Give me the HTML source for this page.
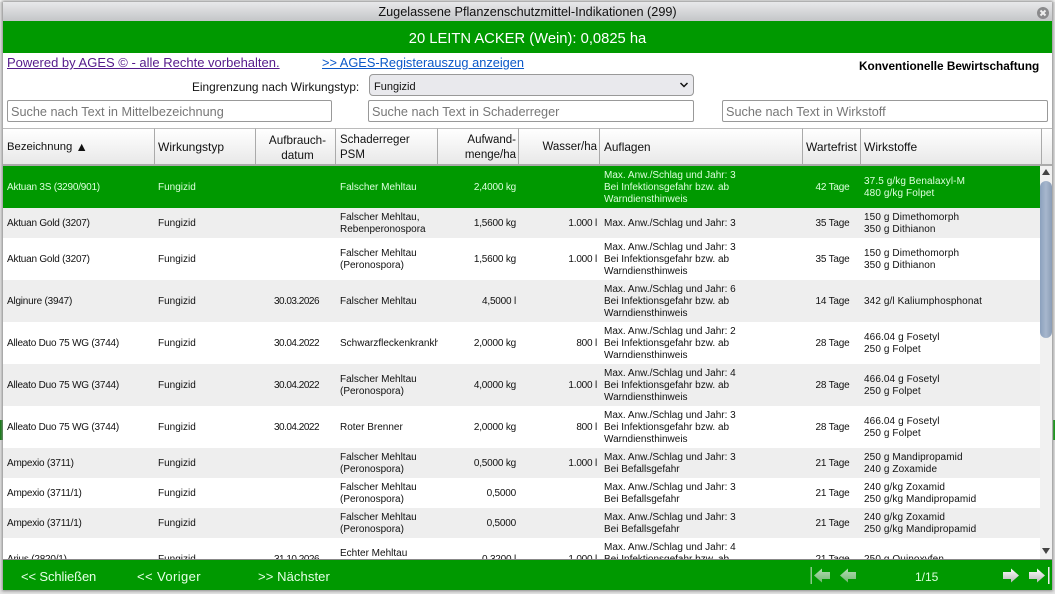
<!DOCTYPE html>
<html><head><meta charset="utf-8"><style>
html,body{margin:0;padding:0;width:1055px;height:594px;overflow:hidden;background:#e4e4e4;font-family:"Liberation Sans",sans-serif;color:#111}
.a{position:absolute;white-space:nowrap}
#win{position:absolute;left:3px;top:2px;width:1049px;height:588px;background:#fff;box-shadow:0 0 3px 1px #888}
#title{left:3px;top:2px;width:1049px;height:19px;background:linear-gradient(#e8e8ea,#c4c6c8);text-align:center;font-size:12.7px;line-height:21px}
#g1{left:3px;top:21px;width:1049px;height:32px;background:#009900;color:#fff;text-align:center;font-size:14.75px;line-height:36px}
a{color:#551a8b;text-decoration:underline}
.inp{height:20px;border:1px solid #999;border-radius:2px;background:#fff;color:#777;font-size:12.7px;line-height:22px;padding-left:3px;box-sizing:content-box;top:100px}
#tbl{position:absolute;left:4px;top:166px;width:1036px;height:393px;overflow:hidden}
table{border-collapse:collapse;table-layout:fixed;width:1037px;font-size:10px;line-height:12px}
td{padding:2px 3px 0;overflow:hidden;white-space:nowrap;vertical-align:middle}
td:first-child{letter-spacing:-.22px}
td:nth-child(3){text-align:center;letter-spacing:-.5px;padding-left:0;padding-right:0}
td:nth-child(5){letter-spacing:-.2px}
td:nth-child(6){padding-right:4px;letter-spacing:-.2px}
td:nth-child(8){letter-spacing:-.2px}
td:nth-child(9){letter-spacing:.1px}
.r{text-align:right}.c{text-align:center}
tbody tr:nth-child(even) td{background:#eee}
tr.s td{background:#009900!important;color:#dcffdc}
.h{position:absolute;top:128px;height:38px;background:linear-gradient(#fff,#e8e8e8);border-top:1px solid #bbb;border-bottom:2px solid #aaa;border-right:1px solid #aaa;box-sizing:border-box;font-size:12px;line-height:15px;display:flex;align-items:center;padding:2px 3px 0}
#foot{left:3px;top:559px;width:1049px;height:31px;background:#009900;border-top:1px solid #888;box-sizing:border-box}
.f{top:569px;font-size:13px;line-height:16px;color:#e6ffe6}
</style></head><body>
<div class="a" style="left:0;top:0;width:1055px;height:2px;background:#f4f4f4"></div>
<div class="a" style="left:0;top:420px;width:3px;height:20px;background:#0a7a0a"></div>
<div class="a" style="left:1053px;top:420px;width:2px;height:20px;background:#0a9a0a"></div>
<div id="win"></div>
<div class="a" id="title">Zugelassene Pflanzenschutzmittel-Indikationen (299)</div>
<svg class="a" style="left:1036px;top:6px" width="14" height="14" viewBox="0 0 14 14"><circle cx="7" cy="7" r="6" fill="#8a8a8c"/><path d="M4.500 4.500l5 5M9.500 4.500l-5 5" stroke="#eee" stroke-width="2"/></svg>
<div class="a" id="g1">20 LEITN ACKER (Wein): 0,0825 ha</div>
<a class="a" style="left:7px;top:55px;font-size:13px;line-height:16px">Powered by AGES © - alle Rechte vorbehalten.</a>
<a class="a" style="left:322px;top:55px;font-size:12.8px;line-height:16px;color:#0a58c8">&gt;&gt; AGES-Registerauszug anzeigen</a>
<div class="a" style="left:859px;top:59px;font-size:11.8px;line-height:14px;font-weight:bold;color:#000">Konventionelle Bewirtschaftung</div>
<div class="a" style="left:192px;top:80px;font-size:11.85px;line-height:14px">Eingrenzung nach Wirkungstyp:</div>
<div class="a" style="left:369px;top:74px;width:325px;height:22px;box-sizing:border-box;border:1px solid #999;border-radius:4px;background:#e9e9ed;font-size:11px;line-height:24px;padding-left:4px">Fungizid</div>
<svg class="a" style="left:679px;top:81px" width="10" height="8" viewBox="0 0 10 8"><path d="M1.500 2l3.500 3.500L8.500 2" fill="none" stroke="#111" stroke-width="1.500"/></svg>
<div class="a inp" style="left:7px;width:320px">Suche nach Text in Mittelbezeichnung</div>
<div class="a inp" style="left:368px;width:321px">Suche nach Text in Schaderreger</div>
<div class="a inp" style="left:722px;width:321px">Suche nach Text in Wirkstoff</div>

<div class="h" style="left:3px;width:152px;padding-left:4px;font-size:11.3px">Bezeichnung&nbsp;<span style="font-size:12.5px">▲</span></div>
<div class="h" style="left:155px;width:101px">Wirkungstyp</div>
<div class="h" style="left:256px;width:80px;justify-content:center;text-align:center;font-size:11.7px;padding-left:4px;padding-right:0">Aufbrauch-<br>datum</div>
<div class="h" style="left:336px;width:102px;font-size:11.5px;padding-left:4px">Schaderreger<br>PSM</div>
<div class="h" style="left:438px;width:81px;justify-content:flex-end;text-align:right;font-size:11.5px;padding-right:2px">Aufwand-<br>menge/ha</div>
<div class="h" style="left:519px;width:81px;justify-content:flex-end;font-size:11.5px;padding-right:2px">Wasser/ha</div>
<div class="h" style="left:600px;width:203px;font-size:11.8px;padding-left:4px">Auflagen</div>
<div class="h" style="left:803px;width:58px">Wartefrist</div>
<div class="h" style="left:861px;width:181px">Wirkstoffe</div>
<div class="h" style="left:1042px;width:10px;border-right:0"></div>

<div class="a" style="left:3px;top:166px;width:1px;height:42px;background:#009900"></div>
<div class="a" style="left:3px;top:208px;width:1px;height:30px;background:#eee"></div>
<div class="a" style="left:3px;top:280px;width:1px;height:42px;background:#eee"></div>
<div class="a" style="left:3px;top:364px;width:1px;height:42px;background:#eee"></div>
<div class="a" style="left:3px;top:448px;width:1px;height:30px;background:#eee"></div>
<div class="a" style="left:3px;top:508px;width:1px;height:30px;background:#eee"></div>

<div id="tbl"><table>
<colgroup><col style="width:151px"><col style="width:101px"><col style="width:81px"><col style="width:101px"><col style="width:81px"><col style="width:82px"><col style="width:203px"><col style="width:57px"><col style="width:180px"></colgroup>
<tbody>
<tr class="s" style="height:42px"><td>Aktuan 3S (3290/901)</td><td>Fungizid</td><td class="c"></td><td>Falscher Mehltau</td><td class="r">2,4000 kg</td><td class="r"></td><td>Max. Anw./Schlag und Jahr: 3<br>Bei Infektionsgefahr bzw. ab<br>Warndiensthinweis</td><td class="c">42 Tage</td><td>37.5 g/kg Benalaxyl-M<br>480 g/kg Folpet</td></tr>
<tr style="height:30px"><td>Aktuan Gold (3207)</td><td>Fungizid</td><td class="c"></td><td>Falscher Mehltau,<br>Rebenperonospora</td><td class="r">1,5600 kg</td><td class="r">1.000 l</td><td>Max. Anw./Schlag und Jahr: 3</td><td class="c">35 Tage</td><td>150 g Dimethomorph<br>350 g Dithianon</td></tr>
<tr style="height:42px"><td>Aktuan Gold (3207)</td><td>Fungizid</td><td class="c"></td><td>Falscher Mehltau<br>(Peronospora)</td><td class="r">1,5600 kg</td><td class="r">1.000 l</td><td>Max. Anw./Schlag und Jahr: 3<br>Bei Infektionsgefahr bzw. ab<br>Warndiensthinweis</td><td class="c">35 Tage</td><td>150 g Dimethomorph<br>350 g Dithianon</td></tr>
<tr style="height:42px"><td>Alginure (3947)</td><td>Fungizid</td><td class="c">30.03.2026</td><td>Falscher Mehltau</td><td class="r">4,5000 l</td><td class="r"></td><td>Max. Anw./Schlag und Jahr: 6<br>Bei Infektionsgefahr bzw. ab<br>Warndiensthinweis</td><td class="c">14 Tage</td><td>342 g/l Kaliumphosphonat</td></tr>
<tr style="height:42px"><td>Alleato Duo 75 WG (3744)</td><td>Fungizid</td><td class="c">30.04.2022</td><td>Schwarzfleckenkrankheit</td><td class="r">2,0000 kg</td><td class="r">800 l</td><td>Max. Anw./Schlag und Jahr: 2<br>Bei Infektionsgefahr bzw. ab<br>Warndiensthinweis</td><td class="c">28 Tage</td><td>466.04 g Fosetyl<br>250 g Folpet</td></tr>
<tr style="height:42px"><td>Alleato Duo 75 WG (3744)</td><td>Fungizid</td><td class="c">30.04.2022</td><td>Falscher Mehltau<br>(Peronospora)</td><td class="r">4,0000 kg</td><td class="r">1.000 l</td><td>Max. Anw./Schlag und Jahr: 4<br>Bei Infektionsgefahr bzw. ab<br>Warndiensthinweis</td><td class="c">28 Tage</td><td>466.04 g Fosetyl<br>250 g Folpet</td></tr>
<tr style="height:42px"><td>Alleato Duo 75 WG (3744)</td><td>Fungizid</td><td class="c">30.04.2022</td><td>Roter Brenner</td><td class="r">2,0000 kg</td><td class="r">800 l</td><td>Max. Anw./Schlag und Jahr: 3<br>Bei Infektionsgefahr bzw. ab<br>Warndiensthinweis</td><td class="c">28 Tage</td><td>466.04 g Fosetyl<br>250 g Folpet</td></tr>
<tr style="height:30px"><td>Ampexio (3711)</td><td>Fungizid</td><td class="c"></td><td>Falscher Mehltau<br>(Peronospora)</td><td class="r">0,5000 kg</td><td class="r">1.000 l</td><td>Max. Anw./Schlag und Jahr: 3<br>Bei Befallsgefahr</td><td class="c">21 Tage</td><td>250 g Mandipropamid<br>240 g Zoxamide</td></tr>
<tr style="height:30px"><td>Ampexio (3711/1)</td><td>Fungizid</td><td class="c"></td><td>Falscher Mehltau<br>(Peronospora)</td><td class="r">0,5000</td><td class="r"></td><td>Max. Anw./Schlag und Jahr: 3<br>Bei Befallsgefahr</td><td class="c">21 Tage</td><td>240 g/kg Zoxamid<br>250 g/kg Mandipropamid</td></tr>
<tr style="height:30px"><td>Ampexio (3711/1)</td><td>Fungizid</td><td class="c"></td><td>Falscher Mehltau<br>(Peronospora)</td><td class="r">0,5000</td><td class="r"></td><td>Max. Anw./Schlag und Jahr: 3<br>Bei Befallsgefahr</td><td class="c">21 Tage</td><td>240 g/kg Zoxamid<br>250 g/kg Mandipropamid</td></tr>
<tr style="height:42px"><td>Arius (2820/1)</td><td>Fungizid</td><td class="c">31.10.2026</td><td>Echter Mehltau<br>(Oidium)</td><td class="r">0,3200 l</td><td class="r">1.000 l</td><td>Max. Anw./Schlag und Jahr: 4<br>Bei Infektionsgefahr bzw. ab<br>Warndiensthinweis</td><td class="c">21 Tage</td><td>250 g Quinoxyfen</td></tr>
</tbody></table></div>

<div class="a" style="left:1040px;top:166px;width:12px;height:393px;background:#f1f1f1"></div>
<div class="a" style="left:1040px;top:181px;width:12px;height:157px;border-radius:6px;background:linear-gradient(90deg,#8ba0bd,#a7b7cd 50%,#8a9cb5)"></div>
<svg class="a" style="left:1041px;top:168px" width="10" height="8"><path d="M5 1l4 6H1z" fill="#444"/></svg>
<svg class="a" style="left:1041px;top:547px" width="10" height="8"><path d="M1 1h8L5 7z" fill="#444"/></svg>

<div class="a" id="foot"></div>
<div class="a f" style="left:21px;letter-spacing:-.12px">&lt;&lt; Schließen</div>
<div class="a f" style="left:137px;letter-spacing:.4px">&lt;&lt; Voriger</div>
<div class="a f" style="left:258px;letter-spacing:.1px">&gt;&gt; Nächster</div>
<div class="a f" style="left:915px;font-size:12px;color:#dcffdc">1/15</div>
<svg class="a" style="left:808px;top:565px" width="52" height="20" viewBox="0 0 52 20"><defs><linearGradient id="l" x1="0" y1="0" x2="0" y2="1"><stop offset="0" stop-color="#b4dcb4"/><stop offset="1" stop-color="#72b872"/></linearGradient></defs><rect x="2.500" y="2" width="1.500" height="17" fill="#8cc98c"/><path d="M6 10.500l8-7v3.500h8v7h-8v3.500z" fill="url(#l)"/><path d="M32 10.500l8-7v3.500h8v7h-8v3.500z" fill="url(#l)"/></svg>
<svg class="a" style="left:1002px;top:565px" width="50" height="20" viewBox="0 0 50 20"><defs><linearGradient id="g" x1="0" y1="0" x2="0" y2="1"><stop offset="0" stop-color="#fff"/><stop offset="1" stop-color="#b8b8b8"/></linearGradient></defs><path d="M1 7h8V3.500l8 7-8 7V14H1z" fill="url(#g)"/><path d="M27 7h8V3.500l8 7-8 7V14h-8z" fill="url(#g)"/><rect x="46" y="2" width="1.500" height="17" fill="#eee"/></svg>
</body></html>
